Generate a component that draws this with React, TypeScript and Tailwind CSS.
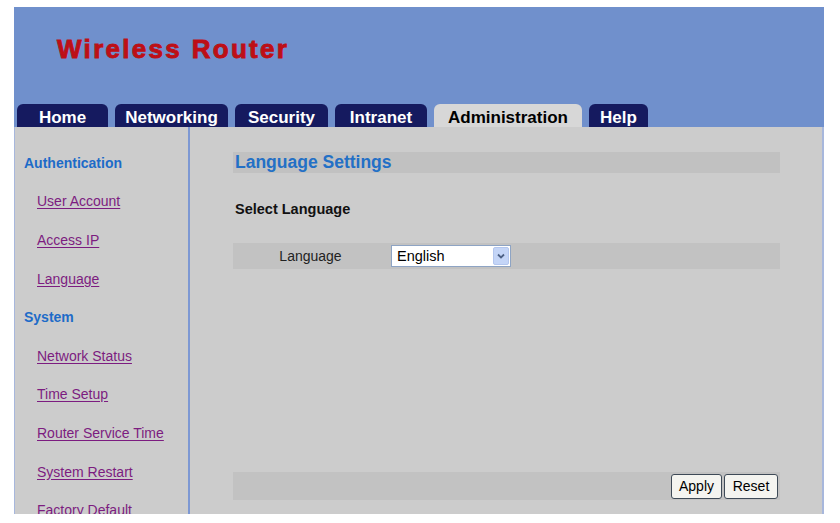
import React from "react";

const tabs = [
  { label: "Home", w: "w-[91px]" },
  { label: "Networking", w: "w-[113px]" },
  { label: "Security", w: "w-[93px]" },
  { label: "Intranet", w: "w-[92px]" },
  { label: "Administration", w: "w-[148px]", active: true },
  { label: "Help", w: "w-[59px]" },
];

const menu = [
  { label: "Authentication", head: true },
  { label: "User Account" },
  { label: "Access IP" },
  { label: "Language" },
  { label: "System", head: true },
  { label: "Network Status" },
  { label: "Time Setup" },
  { label: "Router Service Time" },
  { label: "System Restart" },
  { label: "Factory Default" },
];

export default function App() {
  return (
    <div className="h-[523px] bg-white pt-[7px] pl-[14px] overflow-hidden font-['Liberation_Sans',Arial,sans-serif]">
      <div className="w-[810px]">
        {/* Header */}
        <div className="h-[120px] bg-[#7090cc] flex flex-col justify-between">
          <h1 className="pl-[43px] pt-[29px] text-[26px] leading-[26px] font-bold tracking-[2.3px] text-[#bd0f16] [-webkit-text-stroke:0.9px_#bd0f16]">
            Wireless Router
          </h1>
          <div className="flex items-end gap-[7px] pl-[3px]">
            {tabs.map((t) => (
              <div
                key={t.label}
                className={`${t.w} h-[23px] rounded-t-[6px] flex items-center justify-center text-[17px] font-bold leading-none pt-[3px] ${
                  t.active ? "bg-[#d7d7d7] text-black" : "bg-[#151a5f] text-white"
                }`}
              >
                {t.label}
              </div>
            ))}
          </div>
        </div>

        {/* Body */}
        <div className="h-[387px] flex bg-[#cccccc] border-l border-r-2 border-[#a7b7dc] overflow-hidden">
          {/* Sidebar */}
          <div className="w-[175px] shrink-0 border-r-2 border-[#7d98d3] pt-[17px]">
            {menu.map((m) =>
              m.head ? (
                <div key={m.label} className="h-[38.6px] flex items-center pl-[9px] text-[14px] font-bold text-[#1d6bc8]">
                  {m.label}
                </div>
              ) : (
                <div key={m.label} className="h-[38.6px] flex items-center pl-[22px]">
                  <a href="#" className="text-[14px] text-[#7c1c80] underline underline-offset-[2px]">
                    {m.label}
                  </a>
                </div>
              )
            )}
          </div>

          {/* Content */}
          <div className="flex-1 pl-[43px] pr-[42px] pt-[25px] flex flex-col">
            <div className="h-[21px] bg-[#c1c1c1] flex items-center pl-[2px] text-[17.5px] font-bold text-[#2370c6]">
              Language Settings
            </div>
            <div className="h-[28px] mt-[23px] flex items-center pl-[2px] text-[14.5px] font-bold text-[#111]">
              Select Language
            </div>
            <div className="mt-[19px] h-[26px] bg-[#c2c2c2] flex items-center">
              <div className="w-[155px] text-center text-[14px] text-[#222]">Language</div>
              <div className="ml-[3px] w-[120px] h-[22px] bg-white border border-[#8ea4c4] flex items-center">
                <span className="flex-1 pl-[5px] text-[14.5px] text-black leading-none">English</span>
                <span className="w-[16px] h-[18px] mr-[1px] bg-[#c4d5f7] border border-[#b3c6ee] rounded-[2px] flex items-center justify-center">
                  <svg width="8" height="6" viewBox="0 0 8 6">
                    <path d="M1 1.5 L4 4.5 L7 1.5" fill="none" stroke="#4d6185" strokeWidth="1.8" />
                  </svg>
                </span>
              </div>
            </div>
            <div className="mt-[203px] h-[28px] bg-[#c2c2c2] flex items-center justify-end gap-[2px] pr-[2px]">
              <button className="h-[25px] w-[51px] bg-[#f4f4f0] border border-[#3e4a57] rounded-[3px] text-[14px] text-black">
                Apply
              </button>
              <button className="h-[25px] w-[54px] bg-[#f4f4f0] border border-[#3e4a57] rounded-[3px] text-[14px] text-black">
                Reset
              </button>
            </div>
          </div>
        </div>
      </div>
    </div>
  );
}
